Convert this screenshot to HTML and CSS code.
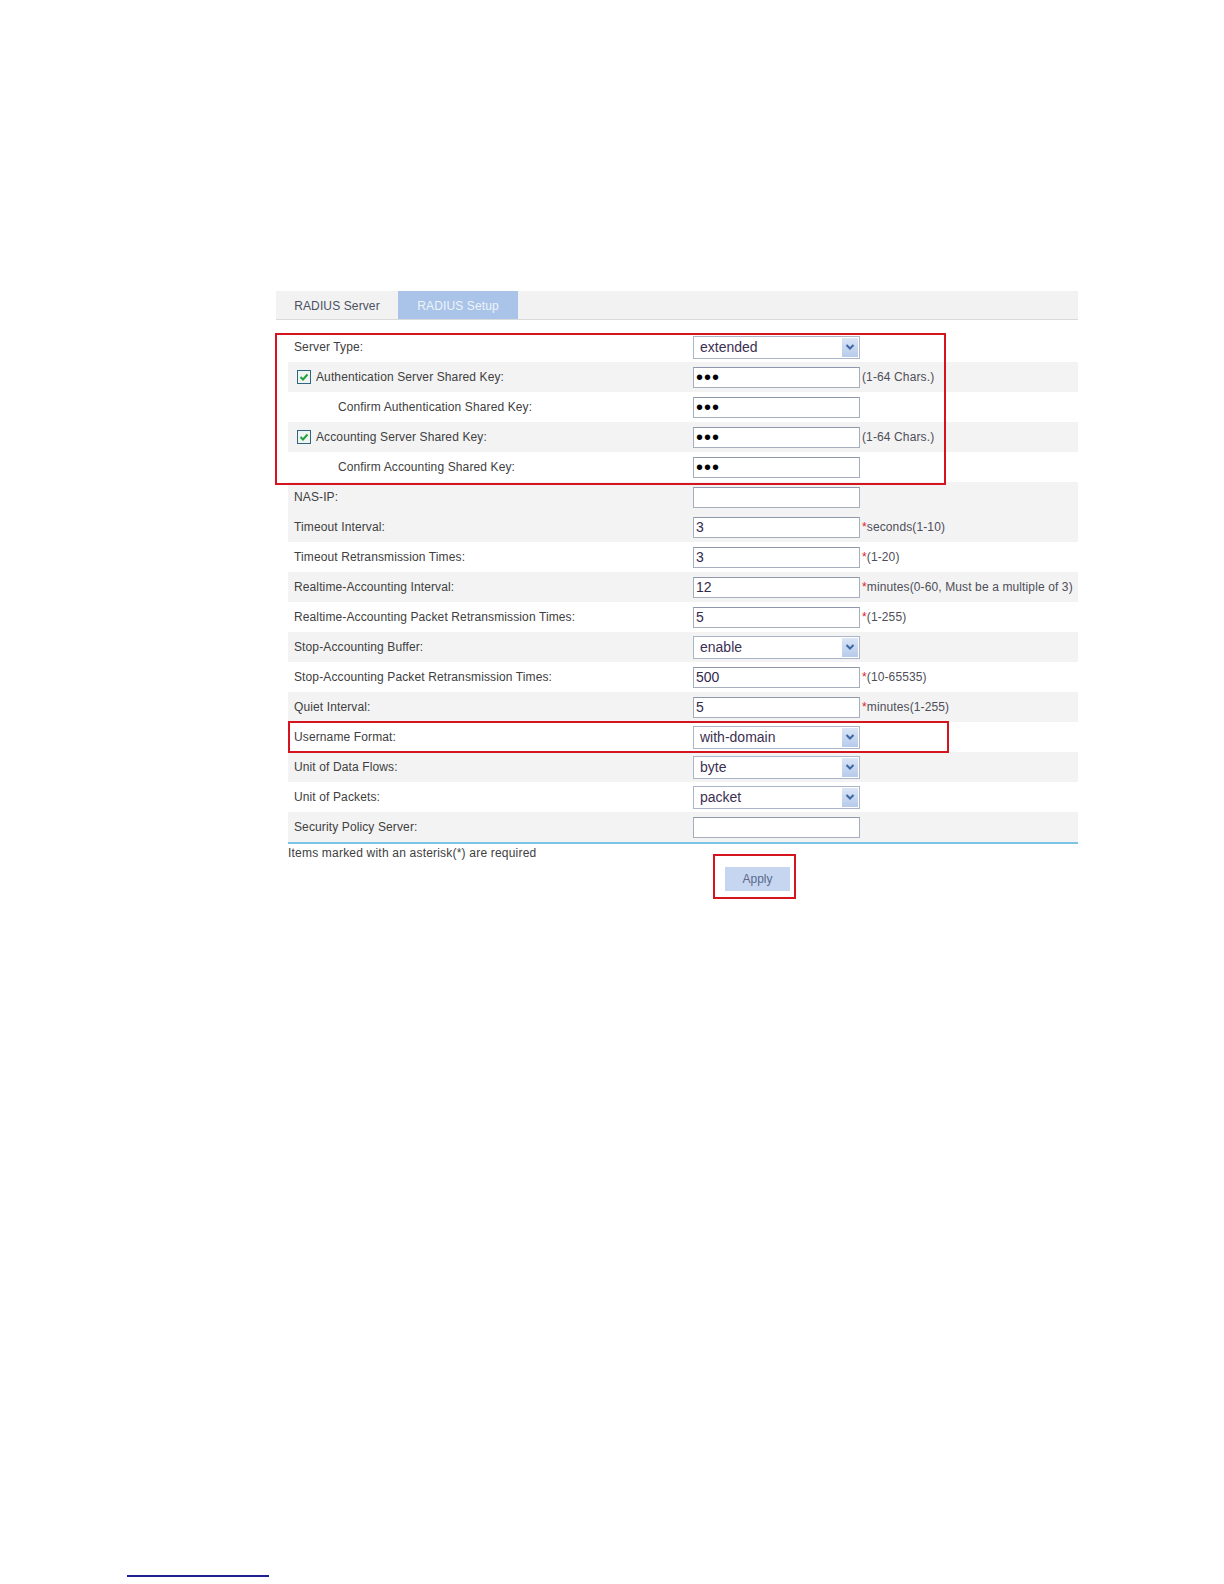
FILE: index.html
```html
<!DOCTYPE html>
<html>
  <head>
    <meta charset="UTF-8">
    <title>RADIUS Setup</title>
    <link rel="stylesheet" href="styles.css">
  </head>
  <body>
    <div class="page">
      <div class="panel">
        <div class="tabs">
          <span class="tab">RADIUS Server</span>
          <span class="tab active">RADIUS Setup</span>
        </div>
        <form class="setup" id="radius-setup">
          <div class="row">
            <label class="label">Server Type:</label>
            <div class="field">
              <div class="select"><span>extended</span><span class="arrow"><svg width="10" height="8" viewBox="0 0 10 8"><path d="M1.5 2 L5 5.5 L8.5 2" fill="none" stroke="#3d66a3" stroke-width="2"/></svg></span></div>
            </div>
          </div>
          <div class="row grey">
            <label class="label check"><svg width="14" height="14" viewBox="0 0 14 14"><rect x="0.5" y="0.5" width="13" height="13" fill="#eef4f2" stroke="#2f6580"/><path d="M3.5 7 L6 9.5 L10.5 4.5" fill="none" stroke="#22a23a" stroke-width="2"/></svg>Authentication Server Shared Key:</label>
            <div class="field"><input type="password" value="key"><span class="hint">(1-64 Chars.)</span></div>
          </div>
          <div class="row">
            <label class="label sub">Confirm Authentication Shared Key:</label>
            <div class="field"><input type="password" value="key"></div>
          </div>
          <div class="row grey">
            <label class="label check"><svg width="14" height="14" viewBox="0 0 14 14"><rect x="0.5" y="0.5" width="13" height="13" fill="#eef4f2" stroke="#2f6580"/><path d="M3.5 7 L6 9.5 L10.5 4.5" fill="none" stroke="#22a23a" stroke-width="2"/></svg>Accounting Server Shared Key:</label>
            <div class="field"><input type="password" value="key"><span class="hint">(1-64 Chars.)</span></div>
          </div>
          <div class="row">
            <label class="label sub">Confirm Accounting Shared Key:</label>
            <div class="field"><input type="password" value="key"></div>
          </div>
          <div class="row grey">
            <label class="label">NAS-IP:</label>
            <div class="field"><input type="text" value=""></div>
          </div>
          <div class="row grey">
            <label class="label">Timeout Interval:</label>
            <div class="field"><input type="text" value="3"><span class="hint"><span class="req">*</span>seconds(1-10)</span></div>
          </div>
          <div class="row">
            <label class="label">Timeout Retransmission Times:</label>
            <div class="field"><input type="text" value="3"><span class="hint"><span class="req">*</span>(1-20)</span></div>
          </div>
          <div class="row grey">
            <label class="label">Realtime-Accounting Interval:</label>
            <div class="field"><input type="text" value="12"><span class="hint"><span class="req">*</span>minutes(0-60, Must be a multiple of 3)</span></div>
          </div>
          <div class="row">
            <label class="label">Realtime-Accounting Packet Retransmission Times:</label>
            <div class="field"><input type="text" value="5"><span class="hint"><span class="req">*</span>(1-255)</span></div>
          </div>
          <div class="row grey">
            <label class="label">Stop-Accounting Buffer:</label>
            <div class="field">
              <div class="select"><span>enable</span><span class="arrow"><svg width="10" height="8" viewBox="0 0 10 8"><path d="M1.5 2 L5 5.5 L8.5 2" fill="none" stroke="#3d66a3" stroke-width="2"/></svg></span></div>
            </div>
          </div>
          <div class="row">
            <label class="label">Stop-Accounting Packet Retransmission Times:</label>
            <div class="field"><input type="text" value="500"><span class="hint"><span class="req">*</span>(10-65535)</span></div>
          </div>
          <div class="row grey">
            <label class="label">Quiet Interval:</label>
            <div class="field"><input type="text" value="5"><span class="hint"><span class="req">*</span>minutes(1-255)</span></div>
          </div>
          <div class="row">
            <label class="label">Username Format:</label>
            <div class="field">
              <div class="select"><span>with-domain</span><span class="arrow"><svg width="10" height="8" viewBox="0 0 10 8"><path d="M1.5 2 L5 5.5 L8.5 2" fill="none" stroke="#3d66a3" stroke-width="2"/></svg></span></div>
            </div>
          </div>
          <div class="row grey">
            <label class="label">Unit of Data Flows:</label>
            <div class="field">
              <div class="select"><span>byte</span><span class="arrow"><svg width="10" height="8" viewBox="0 0 10 8"><path d="M1.5 2 L5 5.5 L8.5 2" fill="none" stroke="#3d66a3" stroke-width="2"/></svg></span></div>
            </div>
          </div>
          <div class="row">
            <label class="label">Unit of Packets:</label>
            <div class="field">
              <div class="select"><span>packet</span><span class="arrow"><svg width="10" height="8" viewBox="0 0 10 8"><path d="M1.5 2 L5 5.5 L8.5 2" fill="none" stroke="#3d66a3" stroke-width="2"/></svg></span></div>
            </div>
          </div>
          <div class="row grey">
            <label class="label">Security Policy Server:</label>
            <div class="field"><input type="text" value=""></div>
          </div>
        </form>
        <p class="note">Items marked with an asterisk(*) are required</p>
        <div class="actions"><button class="apply" type="button">Apply</button></div>

        <!-- red annotation boxes -->
        <div class="mark mark-keys"></div>
        <div class="mark mark-user"></div>
        <div class="mark mark-apply"></div>
      </div>
      <div class="rule"></div>
    </div>
  </body>
</html>
```

FILE: styles.css
```css
body {
	margin: 0;
	background-color: #fff;
	font-family: "Liberation Sans", Arial, sans-serif;
	font-size: 12px;
	letter-spacing: 0.12px;
	color: #404040;
}

.page {
	min-height: 1584px;
	display: flex;
	flex-direction: column;
}

.panel {
	position: relative;
	width: 802px;
	margin: 291px 0 0 276px;
}

.tabs {
	display: flex;
	height: 28px;
	background-color: #f2f2f2;
	border-bottom: 1px solid #dadada;
}

.tab {
	width: 122px;
	padding-top: 1px;
	line-height: 28px;
	text-align: center;
	color: #4a5062;
}

.tab.active {
	width: 120px;
	background-color: #a9c4e8;
	color: #eef3fa;
}

.setup {
	margin: 12px 0 0 12px;
	border-bottom: 2px solid #7cc4e6;
}

.row {
	display: grid;
	grid-template-columns: 405px 1fr;
	align-items: center;
	height: 30px;
}

.row.grey {
	background-color: #f3f3f3;
}

.label {
	padding-left: 6px;
}

.label.check {
	display: flex;
	align-items: center;
	gap: 5px;
	padding-left: 9px;
}

.label.sub {
	padding-left: 50px;
}

.field {
	display: flex;
	align-items: center;
}

.field input {
	width: 167px;
	height: 21px;
	box-sizing: border-box;
	margin: 0;
	padding: 0 2px;
	border: 1px solid #a4aebd;
	border-top-color: #8d98aa;
	background-color: #fff;
	font-family: "Liberation Sans", Arial, sans-serif;
	font-size: 14px;
	letter-spacing: 0;
	color: #342a4e;
}

.field input[type=password] {
	font-size: 20px;
	line-height: 19px;
	letter-spacing: 1px;
	color: #000;
}

.hint {
	margin-left: 2px;
	color: #4e4e58;
}

.req {
	color: #e0202a;
}

.select {
	display: flex;
	align-items: center;
	justify-content: space-between;
	width: 167px;
	height: 23px;
	box-sizing: border-box;
	padding: 0 1px 0 6px;
	border: 1px solid #aab6c8;
	background-color: #fff;
	font-size: 14px;
	letter-spacing: 0;
	color: #3c2f52;
}

.arrow {
	display: flex;
	align-items: center;
	justify-content: center;
	width: 16px;
	height: 19px;
	background: linear-gradient(#dae5f6, #b6caea);
}

.note {
	margin: 2px 0 0 12px;
	line-height: 14px;
	letter-spacing: 0.2px;
}

.actions {
	padding: 7px 0 0 449px;
}

.apply {
	width: 65px;
	height: 24px;
	padding: 0;
	border: none;
	background-color: #c6d6f1;
	font-family: "Liberation Sans", Arial, sans-serif;
	font-size: 12px;
	color: #5b6a8a;
}

.mark {
	position: absolute;
	box-sizing: border-box;
	border: 2px solid #d4141e;
}

.mark-keys {
	left: -1px;
	top: 42px;
	width: 671px;
	height: 152px;
}

.mark-user {
	left: 12px;
	top: 430px;
	width: 661px;
	height: 32px;
}

.mark-apply {
	left: 437px;
	top: 563px;
	width: 83px;
	height: 45px;
}

.rule {
	width: 142px;
	margin: auto 0 7px 127px;
	border-top: 2px solid #1f1f8f;
}
```
